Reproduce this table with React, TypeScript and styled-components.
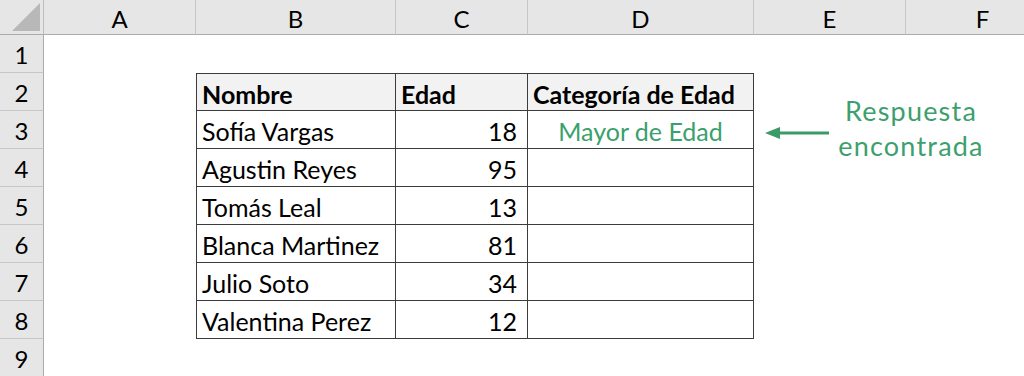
import React from 'react';
import styled, { createGlobalStyle, css } from 'styled-components';

const GlobalStyle = createGlobalStyle`
  html, body {
    margin: 0;
    padding: 0;
    background: #fff;
  }
`;

const columns = ['A', 'B', 'C', 'D', 'E', 'F'];
const rowCount = 9;
const line = '#3c3c3c';

interface Person {
  name: string;
  age: number;
  category?: string;
}

const people: Person[] = [
  { name: 'Sofía Vargas', age: 18, category: 'Mayor de Edad' },
  { name: 'Agustin Reyes', age: 95 },
  { name: 'Tomás Leal', age: 13 },
  { name: 'Blanca Martinez', age: 81 },
  { name: 'Julio Soto', age: 34 },
  { name: 'Valentina Perez', age: 12 },
];

const Sheet = styled.div`
  display: grid;
  grid-template-columns: 44px 152px 200px 132px 226px 152px 154px;
  grid-template-rows: 35px repeat(${rowCount}, 38px);
  width: 1024px;
  height: 376px;
  overflow: hidden;
  background: #fff;
  font-family: Lato, 'Open Sans', sans-serif;
  color: #000;
`;

const Corner = styled.div`
  position: relative;
  background: #e6e6e6;
  border-right: 1px solid #bdbdbd;
  border-bottom: 1px solid #ababab;
  box-sizing: border-box;

  &::after {
    content: '';
    position: absolute;
    right: 3px;
    bottom: 3px;
    border-style: solid;
    border-width: 0 0 28px 28px;
    border-color: transparent transparent #b8b8b8 transparent;
  }
`;

const Header = styled.div<{ $side?: boolean }>`
  display: flex;
  align-items: center;
  justify-content: center;
  background: #e6e6e6;
  box-sizing: border-box;
  font-size: 24px;
  padding-top: 2px;
  border-right: 1px solid ${({ $side }) => ($side ? '#ababab' : '#c6c6c6')};
  border-bottom: 1px solid ${({ $side }) => ($side ? '#c6c6c6' : '#ababab')};
`;

type Align = 'left' | 'right' | 'center';

const Cell = styled.div<{
  $boxed?: boolean;
  $first?: boolean;
  $top?: boolean;
  $head?: boolean;
  $align?: Align;
  $accent?: boolean;
}>`
  display: flex;
  align-items: center;
  box-sizing: border-box;
  padding: 3px 10px 0 5px;
  font-size: 25px;
  white-space: nowrap;
  justify-content: ${({ $align }) =>
    $align === 'right' ? 'flex-end' : $align === 'center' ? 'center' : 'flex-start'};
  ${({ $align }) => $align === 'center' && css`padding: 3px 0 0;`}
  ${({ $boxed }) =>
    $boxed &&
    css`
      border-right: 1px solid ${line};
      border-bottom: 1px solid ${line};
    `}
  ${({ $first }) => $first && css`border-left: 1px solid ${line};`}
  ${({ $top }) => $top && css`border-top: 1px solid ${line};`}
  ${({ $head }) =>
    $head &&
    css`
      background: #f2f2f2;
      font-weight: 700;
    `}
  ${({ $accent }) => $accent && css`color: #3aa06c;`}
`;

/* callout sitting over E2:F4 */
const Note = styled.div`
  grid-column: 6 / 8;
  grid-row: 3 / 6;
  display: flex;
  align-items: center;
  padding-left: 11px;
`;

const Arrow = styled.svg`
  flex: none;
  margin-top: 6px;
`;

const NoteText = styled.div`
  margin-left: 2px;
  margin-top: -4px;
  width: 160px;
  text-align: center;
  font-size: 27px;
  letter-spacing: 1.2px;
  line-height: 35px;
  color: #3d9f6d;
`;

const renderRow = (r: number) => {
  const person = people[r - 3];
  const cells: React.ReactNode[] = [<Header key="h" $side>{r}</Header>, <Cell key="a" />];

  if (r === 2) {
    cells.push(
      <Cell key="b" $boxed $first $top $head>Nombre</Cell>,
      <Cell key="c" $boxed $top $head>Edad</Cell>,
      <Cell key="d" $boxed $top $head>Categoría de Edad</Cell>
    );
  } else if (person) {
    cells.push(
      <Cell key="b" $boxed $first>{person.name}</Cell>,
      <Cell key="c" $boxed $align="right">{person.age}</Cell>,
      <Cell key="d" $boxed $align="center" $accent>{person.category ?? ''}</Cell>
    );
  } else {
    cells.push(<Cell key="b" />, <Cell key="c" />, <Cell key="d" />);
  }

  // E and F are taken by the callout on rows 2-4
  if (r < 2 || r > 4) cells.push(<Cell key="e" />, <Cell key="f" />);

  return <React.Fragment key={r}>{cells}</React.Fragment>;
};

export default function App() {
  const rows = Array.from({ length: rowCount }, (_, i) => i + 1);

  return (
    <>
      <GlobalStyle />
      <Sheet>
        <Note>
          <Arrow width="64" height="14" viewBox="0 0 64 14">
            <polygon points="0,7 15,1 15,13" fill="#3a9a68" />
            <rect x="14" y="5.5" width="50" height="3" fill="#3a9a68" />
          </Arrow>
          <NoteText>
            Respuesta
            <br />
            encontrada
          </NoteText>
        </Note>
        <Corner />
        {columns.map((c) => (
          <Header key={c}>{c}</Header>
        ))}
        {rows.map(renderRow)}
      </Sheet>
    </>
  );
}
